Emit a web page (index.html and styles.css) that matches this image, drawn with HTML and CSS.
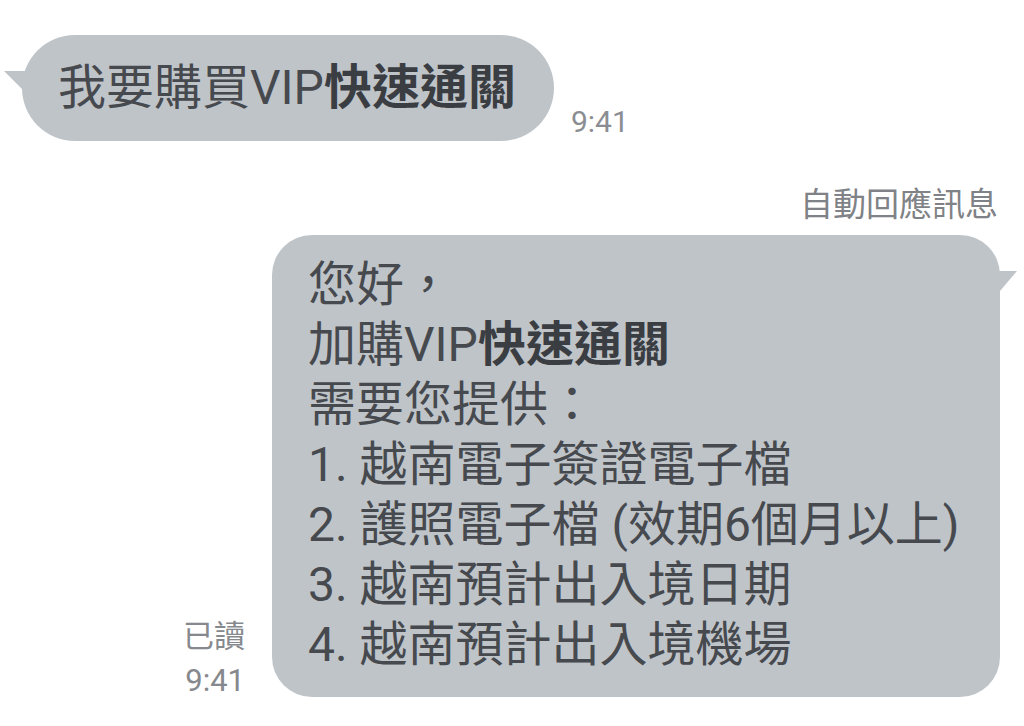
FILE: index.html
```html
<!DOCTYPE html>
<html>
<head>
  <meta charset="UTF-8" />
  <title>Chat</title>
<link rel="stylesheet" href="styles.css">
</head>
<body>

<div class="chat">
  <div class="row row-in">
    <div class="bubble bubble-in">我要購買VIP<strong>快速通關</strong></div>
    <div class="time">9:41</div>
  </div>

  <div class="auto-label">自動回應訊息</div>

  <div class="row row-out">
    <div class="meta">
      <div>已讀</div>
      <div>9:41</div>
    </div>
    <div class="bubble bubble-out">
      <div>您好，</div>
      <div>加購VIP<strong>快速通關</strong></div>
      <div>需要您提供：</div>
      <div>1. 越南電子簽證電子檔</div>
      <div>2. 護照電子檔 (效期6個月以上)</div>
      <div>3. 越南預計出入境日期</div>
      <div>4. 越南預計出入境機場</div>
    </div>
  </div>
</div>

</body>
</html>
```

FILE: styles.css
```css
body {
  margin: 0;
  background: #fff;
  font-family: Roboto, "Noto Sans CJK TC", sans-serif;
}

.chat {
  width: 1024px;
  height: 726px;
  overflow: hidden;
}

.row {
  display: flex;
  align-items: flex-end;
}

.row-in {
  padding: 35px 0 0 22px;
  gap: 17px;
}

.bubble {
  position: relative;
  background: #bfc4c9;
  color: #46494e;
  font-size: 48px;
}

.bubble strong {
  font-weight: 700;
  color: #3a3d42;
}

.bubble-in {
  height: 106px;
  line-height: 106px;
  padding: 0 38px 0 36px;
  border-radius: 53px;
  box-sizing: border-box;
}

/* little tail on the left */
.bubble-in::before {
  content: "";
  position: absolute;
  left: -18px;
  top: 36px;
  width: 30px;
  height: 30px;
  background: #bfc4c9;
  clip-path: polygon(0 0, 100% 0, 100% 100%);
}

.time {
  font-size: 30px;
  color: #8a8d91;
  line-height: 30px;
  padding-bottom: 4px;
}

.auto-label {
  margin-top: 44px;
  padding-right: 26px;
  text-align: right;
  font-size: 33px;
  line-height: 40px;
  color: #7f8286;
}

.row-out {
  justify-content: flex-end;
  padding-right: 24px;
  margin-top: 10px;
  gap: 27px;
}

.meta {
  font-size: 31px;
  line-height: 44px;
  color: #85888c;
  text-align: right;
  margin-bottom: -6px;
}

.bubble-out {
  width: 728px;
  box-sizing: border-box;
  padding: 20px 30px 22px 36px;
  border-radius: 40px;
  line-height: 60px;
}

/* tail on the right */
.bubble-out::after {
  content: "";
  position: absolute;
  right: -17px;
  top: 36px;
  width: 25px;
  height: 20px;
  background: #bfc4c9;
  clip-path: polygon(0 0, 100% 0, 32% 100%, 0 100%);
}
```
